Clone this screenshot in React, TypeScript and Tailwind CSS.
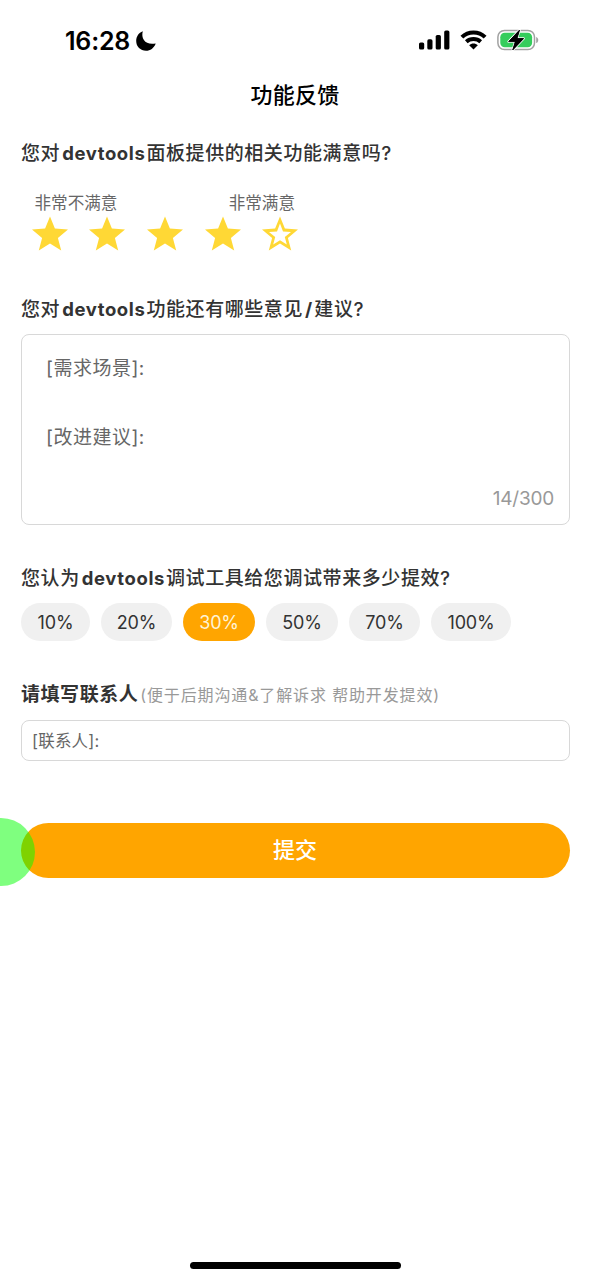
import React from "react";

const STAR =
  "M18 0.5 L22.9 12.6 L36 13.5 L25.9 21.9 L29.2 34.5 L18 27.6 L6.8 34.5 L10.1 21.9 L0 13.5 L13.1 12.6 Z";

function Star({ filled }: { filled: boolean }) {
  return (
    <svg width="36" height="36" viewBox="0 0 36 36" className="block">
      {filled ? (
        <path d={STAR} fill="#ffd835" />
      ) : (
        <path
          fillRule="evenodd"
          fill="#ffd835"
          d={STAR + " M18 7.6 L21 15.4 L29 16 L22.8 21.1 L24.8 28.5 L18 24.3 L11.2 28.5 L13.2 21.1 L7 16 L15 15.4 Z"}
        />
      )}
    </svg>
  );
}

function Latin({ children }: { children: React.ReactNode }) {
  return <span className="pb-[2px] text-[18.5px] font-bold tracking-[0.6px]">{children}</span>;
}

function Heading({ children }: { children: React.ReactNode }) {
  return (
    <h2 className="flex h-[30px] items-center whitespace-pre text-[19px] font-medium leading-[30px] tracking-[0.58px] text-[#333]">
      {children}
    </h2>
  );
}

function StatusBar() {
  return (
    <div className="flex h-[80px] items-center justify-between pl-[65px] pr-[52px]">
      <div className="flex items-center gap-[5.5px] pt-px">
        <span className="text-[25px] font-semibold leading-[30px] tracking-[-0.2px]">16:28</span>
        <svg width="20" height="20" viewBox="0 0 20 20">
          <path d="M6.8 0.2 C4.6 8 10 14.6 19.7 12.4 C18 17 14.3 19.7 10 19.7 C4.5 19.7 0.2 15.6 0.2 10 C0.2 5.5 2.7 1.8 6.8 0.2 Z" fill="#000" />
        </svg>
      </div>
      <div className="flex items-center gap-[10px]">
        <svg width="31" height="20" viewBox="0 0 31 20">
          <rect x="0" y="12.5" width="5.2" height="7" rx="1.6" />
          <rect x="8.3" y="9.3" width="5.2" height="10.2" rx="1.6" />
          <rect x="16.7" y="5" width="5.2" height="14.5" rx="1.6" />
          <rect x="25.2" y="0.5" width="5.2" height="19" rx="1.6" />
        </svg>
        <svg width="27" height="20" viewBox="0 0 27 20">
          <path d="M1.9 7.1 C8.3 0.9 18.7 0.9 25.1 7.1" fill="none" stroke="#000" strokeWidth="4.1" />
          <path d="M6.3 11.7 C10.3 8 16.7 8 20.7 11.7" fill="none" stroke="#000" strokeWidth="3.9" />
          <path d="M9.2 15.2 C11.6 13 15.4 13 17.8 15.2 L13.5 19.6 Z" />
        </svg>
        <svg width="42" height="24" viewBox="0 0 42 24">
          <rect x="0.9" y="2.4" width="36.6" height="19.2" rx="6.6" fill="#fff" stroke="#a2a2a2" strokeWidth="1.5" />
          <rect x="3.3" y="4.8" width="31.8" height="14.4" rx="4.4" fill="#35cd5c" />
          <path d="M39.2 8.9 C41.9 9.7 41.9 14.3 39.2 15.1 Z" fill="#a2a2a2" />
          <path d="M22.6 2 L11.6 13.6 H18.3 L15.7 22 L26.7 10.5 H20 Z" fill="#000" stroke="#fff" strokeWidth="2.4" strokeLinejoin="round" paintOrder="stroke" />
          <path d="M22.6 2 L11.6 13.6 H18.3 L15.7 22 L26.7 10.5 H20 Z" fill="#000" stroke="#000" strokeWidth="0.8" strokeLinejoin="round" />
        </svg>
      </div>
    </div>
  );
}

const OPTIONS = [
  { label: "10%", width: "w-[69px]" },
  { label: "20%", width: "w-[71px]" },
  { label: "30%", width: "w-[72px]" },
  { label: "50%", width: "w-[72px]" },
  { label: "70%", width: "w-[71px]" },
  { label: "100%", width: "w-[80px]" },
];

export default function App() {
  return (
    <div className="relative flex h-[1280px] w-[591px] flex-col overflow-hidden bg-white font-['Inter','Noto_Sans_CJK_SC',sans-serif] text-black">
      <StatusBar />
      <h1 className="h-[30px] pr-px text-center text-[22px] font-medium leading-[30px] tracking-[0.2px]">功能反馈</h1>

      <main className="flex flex-col px-[21px] pt-[29px]">
        <Heading>
          <span>您对</span>
          <span className="w-[2px]" />
          <Latin>devtools</Latin>
          <span className="w-px" />
          <span>面板提供的相关功能满意吗?</span>
        </Heading>
        <div className="ml-[13.5px] mt-[22px] flex h-[24px] w-[260.5px] items-center justify-between text-[16.6px] leading-[24px] text-[#666]">
          <span>非常不满意</span>
          <span>非常满意</span>
        </div>
        <div className="ml-[10.5px] mt-[0.5px] flex gap-[21.7px]">
          {[1, 2, 3, 4, 5].map((n) => (
            <Star key={n} filled={n < 5} />
          ))}
        </div>

        <div className="mt-[43.5px]">
          <Heading>
            <span>您对</span>
            <span className="w-[2px]" />
            <Latin>devtools</Latin>
            <span className="w-px" />
            <span>功能还有哪些意见</span>
            <span className="w-[2px]" />
            <Latin>/</Latin>
            <span className="w-[1.5px]" />
            <span>建议?</span>
          </Heading>
        </div>
        <div className="mt-[9px] flex h-[191px] flex-col rounded-[8px] border border-[#d8d8d8] pl-[24px] pr-[15px] pt-[19px] text-[19px] leading-[30px] text-[#666]">
          <div className="h-[69px] tracking-[0.5px]">[需求场景]:</div>
          <div className="h-[61px] tracking-[0.5px]">[改进建议]:</div>
          <div className="text-right tracking-[-0.2px] text-[#999]">14/300</div>
        </div>

        <div className="mt-[39px]">
          <Heading>
            <span>您认为</span>
            <span className="w-[2px]" />
            <Latin>devtools</Latin>
            <span className="w-px" />
            <span>调试工具给您调试带来多少提效?</span>
          </Heading>
        </div>
        <div className="mt-[9px] flex gap-[11px]">
          {OPTIONS.map((o) => (
            <div
              key={o.label}
              className={`${o.width} h-[38px] rounded-full pt-px text-center text-[18px] leading-[38px] tracking-[-0.2px] ${
                o.label === "30%" ? "bg-[#ffa500] text-[#fff3d6]" : "bg-[#f0f0f0] text-[#333]"
              }`}
            >
              {o.label}
            </div>
          ))}
        </div>

        <div className="mt-[39px] flex h-[30px] items-center whitespace-pre">
          <span className="text-[19px] font-bold tracking-[0.55px] text-[#333]">请填写联系人</span>
          <span className="ml-[2px] text-[16px] tracking-[0.86px] text-[#999]">(便于后期沟通&了解诉求 帮助开发提效)</span>
        </div>
        <div className="mt-[10px] h-[41px] rounded-[8px] border border-[#d8d8d8] pl-[10px] pt-px text-[16.5px] leading-[39px] tracking-[0.2px] text-[#666]">
          [联系人]:
        </div>
        <button className="mt-[62px] h-[55px] rounded-full bg-[#ffa500] pr-px text-[22px] font-medium leading-[55px] text-white">
          提交
        </button>
      </main>

      <div className="absolute left-[-33px] top-[818px] size-[68px] rounded-full bg-[#00ff00]/50" />
      <div className="absolute bottom-[11px] left-[190px] h-[7px] w-[211px] rounded-full bg-black" />
    </div>
  );
}
